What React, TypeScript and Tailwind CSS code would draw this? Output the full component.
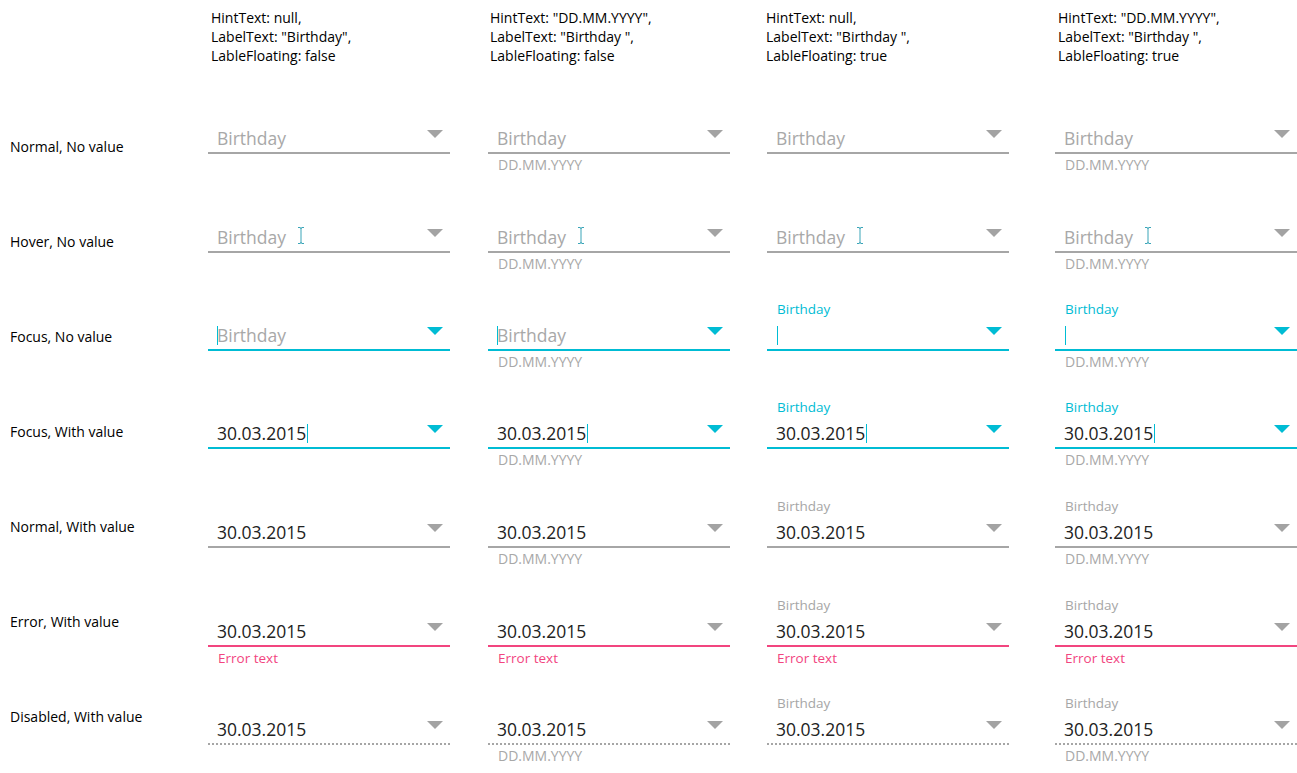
import React from "react";

type Row = {
  name: string;
  value: boolean;
  state: "normal" | "hover" | "focus" | "error" | "disabled";
  h: string;
};

type Col = {
  hint: string | null;
  floating: boolean;
  header: string[];
  ml: string;
  headerPad: string;
};

const rows: Row[] = [
  { name: "Normal, No value", value: false, state: "normal", h: "h-[99px]" },
  { name: "Hover, No value", value: false, state: "hover", h: "h-[98px]" },
  { name: "Focus, No value", value: false, state: "focus", h: "h-[98px]" },
  { name: "Focus, With value", value: true, state: "focus", h: "h-[99px]" },
  { name: "Normal, With value", value: true, state: "normal", h: "h-[99px]" },
  { name: "Error, With value", value: true, state: "error", h: "h-[98px]" },
  { name: "Disabled, With value", value: true, state: "disabled", h: "h-[80px]" },
];

const cols: Col[] = [
  {
    hint: null,
    floating: false,
    header: ["HintText: null,", 'LabelText: "Birthday",', "LableFloating: false"],
    ml: "ml-0",
    headerPad: "pl-[3px]",
  },
  {
    hint: "DD.MM.YYYY",
    floating: false,
    header: ['HintText: "DD.MM.YYYY",', 'LabelText: "Birthday ",', "LableFloating: false"],
    ml: "ml-[38px]",
    headerPad: "pl-[2px]",
  },
  {
    hint: null,
    floating: true,
    header: ["HintText: null,", 'LabelText: "Birthday ",', "LableFloating: true"],
    ml: "ml-[37px]",
    headerPad: "-ml-px",
  },
  {
    hint: "DD.MM.YYYY",
    floating: true,
    header: ['HintText: "DD.MM.YYYY",', 'LabelText: "Birthday ",', "LableFloating: true"],
    ml: "ml-[46px]",
    headerPad: "pl-[3px]",
  },
];

function Arrow({ active }: { active: boolean }) {
  return (
    <svg width="16" height="8" viewBox="0 0 16 8" className="self-start mt-[6px] shrink-0">
      <path d="M0 0 H16 L8 8 Z" fill={active ? "#00bcd4" : "#a3a3a3"} />
    </svg>
  );
}

function IBeam() {
  return (
    <svg
      width="8"
      height="17"
      viewBox="0 0 8 17"
      className="absolute left-[89px] top-[6px]"
    >
      <path
        d="M1 0.5 H3 Q4 0.5 4 2 V15 Q4 16.5 3 16.5 H1 M7 0.5 H5 Q4 0.5 4 2 M4 15 Q4 16.5 5 16.5 H7"
        stroke="#3aa5b8"
        strokeWidth="1"
        fill="none"
      />
    </svg>
  );
}

function Field({ row, col }: { row: Row; col: Col }) {
  const focus = row.state === "focus";
  const showLabelTop = col.floating && (row.value || focus);
  const showPlaceholder = !row.value && !(col.floating && focus);

  let line = "border-b-2 border-[#a6a6a6]";
  if (focus) line = "border-b-2 border-[#00bcd4]";
  if (row.state === "error") line = "border-b-2 border-[#f2457f]";
  if (row.state === "disabled") line = "border-b-2 border-dotted border-[#a6a6a6]";

  return (
    <div className="flex flex-col">
      <div
        className={`h-[20px] pl-[10px] text-[13.5px] leading-[20px] ${
          focus ? "text-[#00bcd4]" : "text-[#a6a6a6]"
        }`}
      >
        {showLabelTop ? "Birthday" : ""}
      </div>
      <div className={`relative flex h-[32px] items-center justify-between pl-[9px] pr-[7px] pt-[2px] ${line}`}>
        <div className="flex items-center text-[17.5px]">
          {row.value ? (
            <>
              <span className="text-[#222]">30.03.2015</span>
              {focus && <span className="ml-px inline-block h-[19px] w-px bg-[#00bcd4]" />}
            </>
          ) : showPlaceholder ? (
            <span className="text-[#a8a8a8]">Birthday</span>
          ) : (
            <span className="ml-px inline-block h-[19px] w-px bg-[#00bcd4]" />
          )}
        </div>
        {focus && !row.value && !col.floating && (
          <span className="absolute left-[9px] top-[7px] h-[19px] w-px bg-[#00bcd4]" />
        )}
        {row.state === "hover" && <IBeam />}
        <Arrow active={focus} />
      </div>
      <div
        className={`h-[22px] pl-[10px] leading-[22px] ${
          row.state === "error" ? "text-[13.5px] text-[#f2457f]" : "text-[14px] text-[#a8a8a8]"
        }`}
      >
        {row.state === "error" ? "Error text" : col.hint ?? ""}
      </div>
    </div>
  );
}

export default function App() {
  return (
    <div
      className="flex h-[773px] w-[1297px] overflow-hidden bg-white text-black"
      style={{ fontFamily: '"Open Sans", "Noto Sans", sans-serif' }}
    >
      {/* Row names */}
      <div className="flex w-[208px] shrink-0 flex-col pt-[137px] pl-[10px] text-[14px]">
        {rows.map((r) => (
          <div key={r.name} className="h-[95px] shrink-0 leading-[20px]">
            {r.name}
          </div>
        ))}
      </div>

      {cols.map((c, i) => (
        <div key={i} className={`flex w-[242px] shrink-0 flex-col ${c.ml}`}>
          <div className={`h-[102px] shrink-0 pt-[8px] text-[14px] leading-[19px] ${c.headerPad}`}>
            {c.header.map((t) => (
              <div key={t}>{t}</div>
            ))}
          </div>
          {rows.map((r) => (
            <div key={r.name} className={`shrink-0 ${r.h}`}>
              <Field row={r} col={c} />
            </div>
          ))}
        </div>
      ))}
    </div>
  );
}
